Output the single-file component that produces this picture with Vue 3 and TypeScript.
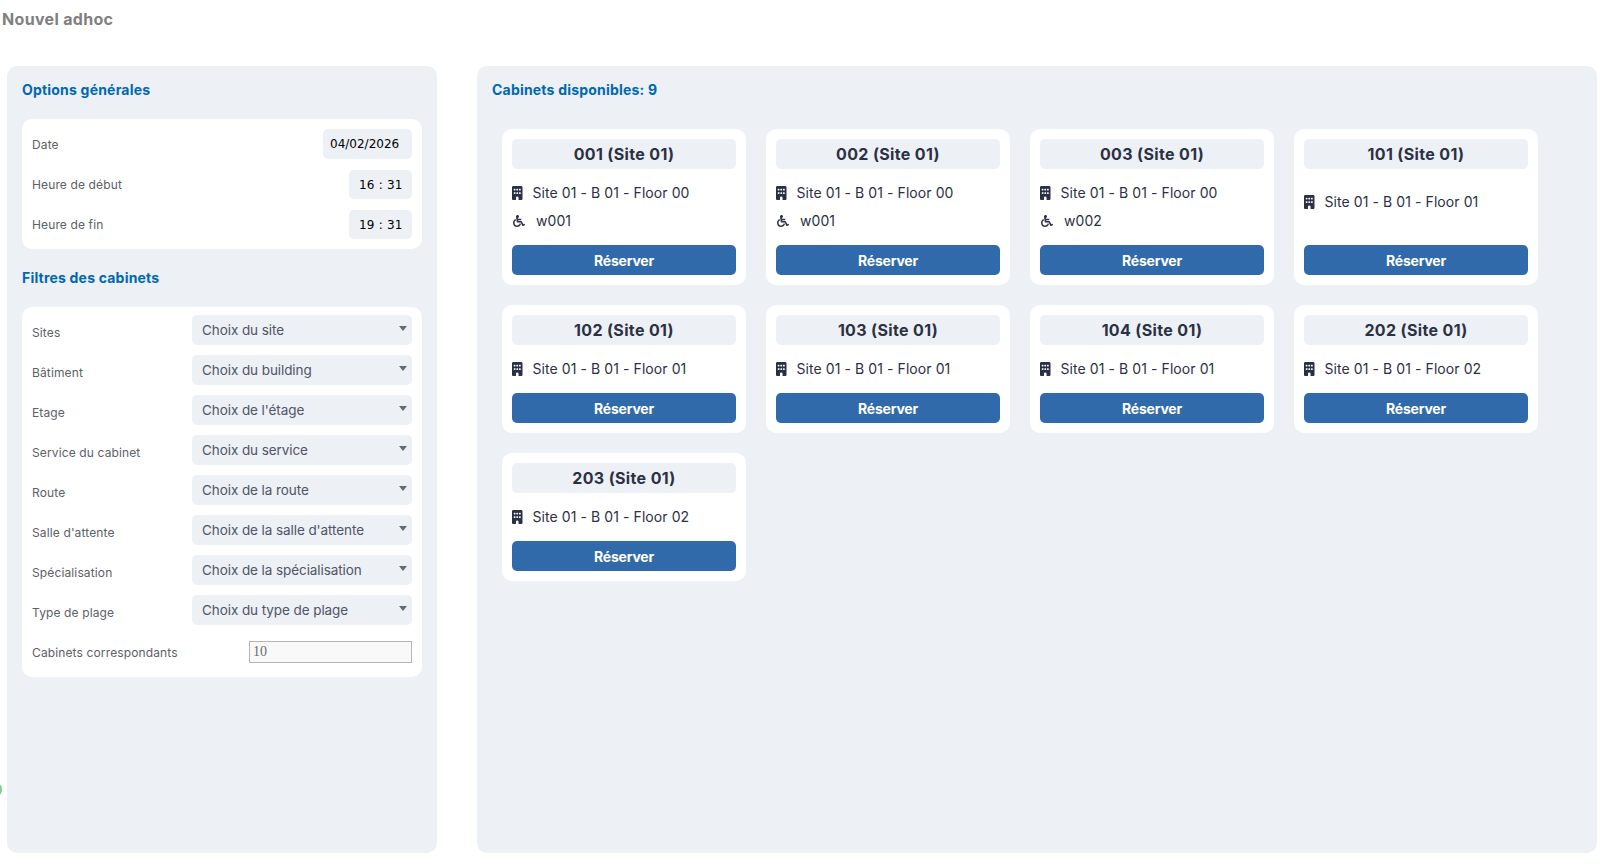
<script setup lang="ts">
interface Cabinet {
  name: string
  location: string
  waiting?: string
}

const filters = [
  { label: 'Sites', placeholder: 'Choix du site' },
  { label: 'Bâtiment', placeholder: 'Choix du building' },
  { label: 'Etage', placeholder: "Choix de l'étage" },
  { label: 'Service du cabinet', placeholder: 'Choix du service' },
  { label: 'Route', placeholder: 'Choix de la route' },
  { label: "Salle d'attente", placeholder: "Choix de la salle d'attente" },
  { label: 'Spécialisation', placeholder: 'Choix de la spécialisation' },
  { label: 'Type de plage', placeholder: 'Choix du type de plage' },
]

const cabinets: Cabinet[] = [
  { name: '001 (Site 01)', location: 'Site 01 - B 01 - Floor 00', waiting: 'w001' },
  { name: '002 (Site 01)', location: 'Site 01 - B 01 - Floor 00', waiting: 'w001' },
  { name: '003 (Site 01)', location: 'Site 01 - B 01 - Floor 00', waiting: 'w002' },
  { name: '101 (Site 01)', location: 'Site 01 - B 01 - Floor 01', waiting: '' },
  { name: '102 (Site 01)', location: 'Site 01 - B 01 - Floor 01' },
  { name: '103 (Site 01)', location: 'Site 01 - B 01 - Floor 01' },
  { name: '104 (Site 01)', location: 'Site 01 - B 01 - Floor 01' },
  { name: '202 (Site 01)', location: 'Site 01 - B 01 - Floor 02' },
  { name: '203 (Site 01)', location: 'Site 01 - B 01 - Floor 02' },
]
</script>

<template>
  <div class="page">
    <span class="edge-dot"></span>
    <h1 class="page-title">Nouvel adhoc</h1>
    <div class="columns">
      <aside class="panel side">
        <h2 class="section-title">Options générales</h2>
        <div class="box options">
          <div class="option-row">
            <span class="label">Date</span>
            <span class="date-value">04/02/2026</span>
          </div>
          <div class="option-row">
            <span class="label">Heure de début</span>
            <span class="time-value">16 : 31</span>
          </div>
          <div class="option-row">
            <span class="label">Heure de fin</span>
            <span class="time-value">19 : 31</span>
          </div>
        </div>
        <h2 class="section-title filters-title">Filtres des cabinets</h2>
        <div class="box filters">
          <div v-for="f in filters" :key="f.label" class="filter-row">
            <span class="label filter-label">{{ f.label }}</span>
            <div class="select">{{ f.placeholder }}</div>
          </div>
          <div class="count-row">
            <span class="label">Cabinets correspondants</span>
            <input class="count" type="text" value="10" readonly />
          </div>
        </div>
      </aside>

      <main class="panel results">
        <h2 class="section-title">Cabinets disponibles: 9</h2>
        <div class="grid">
          <article v-for="c in cabinets" :key="c.name" class="card">
            <h3 class="card-title">{{ c.name }}</h3>
            <div class="card-body">
              <div class="info">
                <svg class="icon-building" viewBox="0 0 384 512" aria-hidden="true">
                  <path d="M48 0C21.500 0 0 21.500 0 48V464c0 26.500 21.500 48 48 48h96V432c0-26.500 21.500-48 48-48s48 21.500 48 48v80h96c26.500 0 48-21.500 48-48V48c0-26.500-21.500-48-48-48H48zM64 240c0-8.800 7.200-16 16-16h32c8.800 0 16 7.200 16 16v32c0 8.800-7.200 16-16 16H80c-8.800 0-16-7.200-16-16V240zm112-16h32c8.800 0 16 7.200 16 16v32c0 8.800-7.200 16-16 16H176c-8.800 0-16-7.200-16-16V240c0-8.800 7.200-16 16-16zm80 16c0-8.800 7.200-16 16-16h32c8.800 0 16 7.200 16 16v32c0 8.800-7.200 16-16 16H272c-8.800 0-16-7.200-16-16V240zM80 96h32c8.800 0 16 7.200 16 16v32c0 8.800-7.200 16-16 16H80c-8.800 0-16-7.200-16-16V112c0-8.800 7.200-16 16-16zm80 16c0-8.800 7.200-16 16-16h32c8.800 0 16 7.200 16 16v32c0 8.800-7.200 16-16 16H176c-8.800 0-16-7.200-16-16V112zM272 96h32c8.800 0 16 7.200 16 16v32c0 8.800-7.200 16-16 16H272c-8.800 0-16-7.200-16-16V112c0-8.800 7.200-16 16-16z" />
                </svg>
                <span>{{ c.location }}</span>
              </div>
              <div v-if="c.waiting" class="info">
                <svg class="icon-wheelchair" viewBox="0 0 512 512" aria-hidden="true">
                  <path d="M496.101 385.669l14.227 28.663c3.929 7.915.697 17.516-7.218 21.445l-65.465 32.886c-16.049 7.967-35.556 1.194-43.189-15.055L331.679 320H192c-15.925 0-29.426-11.710-31.679-27.475C126.433 55.308 128.380 70.044 128 64c0-36.358 30.318-65.635 67.052-63.929 33.271 1.545 60.048 28.905 60.925 62.201.868 32.933-23.152 60.423-54.608 65.039l4.670 32.690H336c8.837 0 16 7.163 16 16v32c0 8.837-7.163 16-16 16H215.182l4.572 32H352a32 32 0 0 1 28.962 18.392L438.477 396.800l36.178-18.349c7.915-3.929 17.517-.697 21.446 7.218zM311.358 352h-24.506c-7.788 54.204-54.528 96-110.852 96-61.757 0-112-50.243-112-112 0-41.505 22.694-77.809 56.324-97.156-3.712-25.965-6.844-47.860-9.488-66.333C45.956 198.464 0 261.963 0 336c0 97.047 78.953 176 176 176 71.870 0 133.806-43.308 161.110-105.192L311.358 352z" />
                </svg>
                <span>{{ c.waiting }}</span>
              </div>
              <div v-else-if="c.waiting === ''" class="info-empty"></div>
            </div>
            <button class="reserve" type="button">Réserver</button>
          </article>
        </div>
      </main>
    </div>
  </div>
</template>

<style>
html, body { margin: 0; background: #fff; }
</style>

<style scoped>
.page {
  position: relative;
  height: 868px;
  box-sizing: border-box;
  overflow: hidden;
  font-family: Inter, "Noto Sans", sans-serif;
  color: #2b3044;
}
.edge-dot {
  position: absolute;
  left: -5px;
  top: 784px;
  width: 7px;
  height: 11px;
  border-radius: 50%;
  background: #7fd08f;
}
.page-title {
  margin: 0;
  height: 66px;
  box-sizing: border-box;
  padding: 9px 0 0 2px;
  font-size: 16px;
  line-height: 20px;
  font-weight: 700;
  letter-spacing: 0.32px;
  color: #808080;
}
.columns {
  display: flex;
  gap: 40px;
  padding: 0 12px 0 7px;
  height: 787px;
}
.panel {
  background: #edf0f5;
  border-radius: 10px;
  box-sizing: border-box;
}
.side {
  width: 430px;
  flex: none;
  padding: 15px 15px 0;
}
.results {
  flex: 1;
  padding: 15px;
}
.section-title {
  margin: 0;
  font-size: 14px;
  line-height: 18px;
  font-weight: 700;
  letter-spacing: 0.2px;
  color: #0068b3;
}
.filters-title { margin-top: 20px; }
.box {
  background: #fff;
  border-radius: 10px;
}
.options {
  margin-top: 20px;
  padding: 10px;
  display: flex;
  flex-direction: column;
  gap: 10px;
}
.option-row {
  display: flex;
  align-items: center;
  justify-content: space-between;
  height: 30px;
}
.label {
  font-size: 12px;
  letter-spacing: 0.13px;
  color: #5c6068;
}
.date-value, .time-value {
  background: #edf0f5;
  border-radius: 5px;
  color: #000;
  box-sizing: border-box;
  font-family: "DejaVu Sans", sans-serif;
  font-size: 12px;
}
.date-value {
  width: 89px;
  height: 30px;
  line-height: 30px;
  padding-left: 7px;
}
.time-value {
  width: 63px;
  height: 29px;
  line-height: 30px;
  align-self: flex-end;
  padding-left: 10px;
  letter-spacing: 0.2px;
}
.filters {
  margin-top: 20px;
  padding: 8px 10px 14px;
  display: flex;
  flex-direction: column;
  gap: 10px;
}
.filter-row {
  display: grid;
  grid-template-columns: 160px 220px;
  height: 30px;
  align-items: center;
}
.filter-label { padding-top: 4px; }
.select {
  position: relative;
  height: 30px;
  line-height: 31px;
  padding-left: 10px;
  background: #edf0f5;
  border-radius: 5px;
  font-size: 13.5px;
  letter-spacing: -0.08px;
  color: #4f5568;
}
.select::after {
  content: "";
  position: absolute;
  right: 5px;
  top: 11px;
  border: 4px solid transparent;
  border-top: 5px solid #666a75;
  border-bottom: 0;
}
.count-row {
  display: flex;
  justify-content: space-between;
  align-items: center;
  height: 22px;
  margin-top: 6px;
}
.count {
  width: 163px;
  height: 22px;
  box-sizing: border-box;
  padding: 0 3px;
  border: 1px solid #b5b5b5;
  background: #f9f9f9;
  font-family: "Liberation Serif", serif;
  font-size: 14px;
  color: #6b6b6b;
  outline: none;
}
.grid {
  display: grid;
  grid-template-columns: repeat(4, 244px);
  gap: 20px;
  margin: 30px 0 0 10px;
}
.card {
  display: flex;
  flex-direction: column;
  padding: 10px;
  background: #fff;
  border-radius: 10px;
}
.card-title {
  margin: 0;
  height: 30px;
  line-height: 31px;
  text-align: center;
  background: #edf0f5;
  border-radius: 5px;
  font-size: 16px;
  font-weight: 700;
  letter-spacing: 0.35px;
}
.card-body {
  flex: 1;
  display: flex;
  flex-direction: column;
  justify-content: center;
  padding: 10px 0;
}
.info {
  display: flex;
  align-items: center;
  height: 28px;
  padding-bottom: 1px;
  box-sizing: border-box;
  font-size: 14px;
  letter-spacing: 0.08px;
}
.info-empty { height: 10px; }
.icon-building {
  width: 10.5px;
  height: 14px;
  margin-right: 10px;
  fill: #2b3044;
}
.icon-wheelchair {
  width: 12px;
  height: 12px;
  margin: 0 11px 0 1px;
  fill: #2b3044;
}
.reserve {
  height: 30px;
  border: 0;
  border-radius: 5px;
  background: #306aab;
  color: #fff;
  font-family: inherit;
  font-size: 14px;
  font-weight: 700;
  letter-spacing: -0.2px;
  padding: 0;
}
</style>
